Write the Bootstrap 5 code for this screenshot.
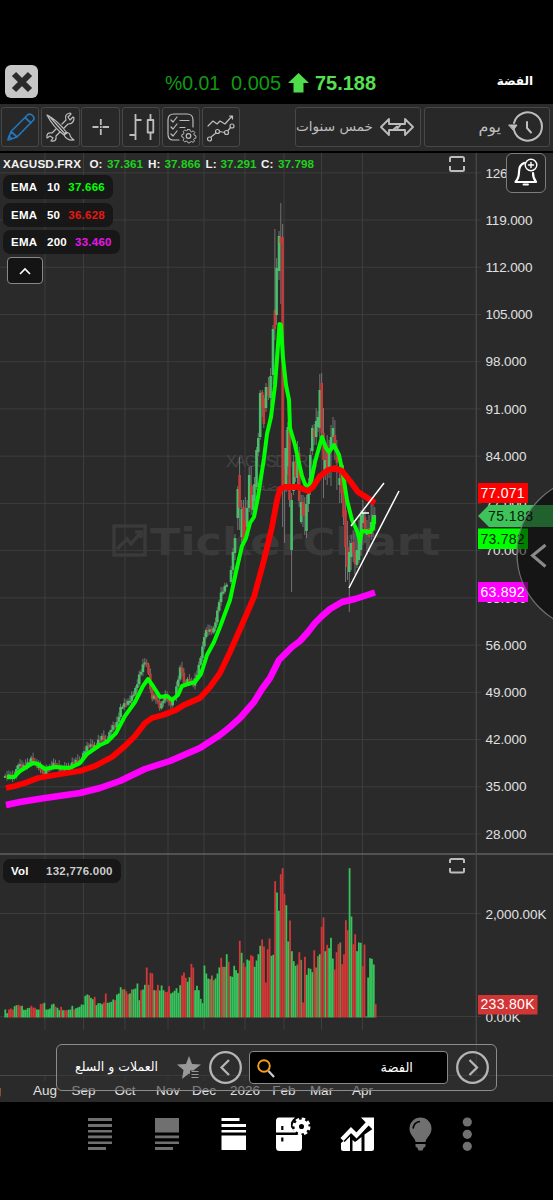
<!DOCTYPE html>
<html lang="ar">
<head>
<meta charset="utf-8">
<meta name="viewport" content="width=device-width, initial-scale=1">
<title>TickerChart</title>
<link href="https://cdn.jsdelivr.net/npm/bootstrap@5.3.0/dist/css/bootstrap.min.css" rel="stylesheet">
<style>
body{background:#000;color:#fff;font-family:"Liberation Sans","DejaVu Sans",sans-serif;width:553px;height:1200px;overflow:hidden}
.ar{font-family:"DejaVu Sans",sans-serif;white-space:nowrap;line-height:1}
.quote-bar{height:104px;padding:60px 20px 0 5px}
.quote-title{font-size:12px;margin-top:15px}
.close-btn{width:33px;height:33px;border-radius:6px;background:#c6c6c6;margin-top:5px}
.quote-values{margin-left:6px}
.tool-bar{height:47px;background:#2b2b2b;padding:3px 3px 4px 1px}
.tool{width:38.4px;height:40px;border:1px solid #484848;border-radius:3px;background:#282828}
.tool-wide{width:126px;color:#bdbdbd;font-size:14px}
.tool svg,.tool-wide svg{fill:none;stroke:#bdbdbd;stroke-width:1.2;stroke-linecap:round;stroke-linejoin:round}
.chart{height:951px;background:#2a2a2a}
.legends{left:3px;top:24px;gap:3.4px}
.pill{height:24.2px;border-radius:7px;background:#161616e8;font-weight:700;font-size:11.5px;letter-spacing:.25px;line-height:24px;padding:0 8px;white-space:nowrap}
.fold{left:7px;top:106px;width:36px;height:27px;border:1px solid #888;border-radius:4px;background:#141414}
.vol{left:3px;top:708px;width:118px}
.bell{left:506px;top:2px;width:40px;height:40px;border:1px solid #7d7d7d;border-radius:6px;background:#242424}
.picker{left:56px;top:893px;width:441px;height:47px;border:1.5px solid #8c8c8c;border-radius:6px;background:rgba(48,48,48,.55);padding:0 6px 0 18px}
.find{width:199px;height:33px;border:1px solid #888;border-radius:4px;background:#000;padding:0 34px 0 5px;font-size:13px}
.foot{height:98px}
</style>
</head>
<body class="d-flex flex-column">
<header class="quote-bar d-flex align-items-start flex-shrink-0">
  <div class="close-btn d-flex align-items-center justify-content-center flex-shrink-0">
    <svg width="22" height="22" viewBox="0 0 22 22"><path d="M3 3L19 19M19 3L3 19" stroke="#2b2b2b" stroke-width="6"/></svg>
  </div>
  <svg width="336" height="40" viewBox="44 60 336 40" class="quote-values flex-shrink-0" font-size="20">
    <g fill="#129b12"><text x="165" y="89.500" textLength="55" lengthAdjust="spacingAndGlyphs">%0.01</text><text x="231" y="89.500" textLength="50" lengthAdjust="spacingAndGlyphs">0.005</text></g>
    <path d="M298.500 73L309 83H303.500V92.500H293.500V83H288Z" fill="#4fdd4b"/>
    <text x="315" y="89.500" fill="#57e052" font-weight="700" textLength="61" lengthAdjust="spacingAndGlyphs">75.188</text>
  </svg>
  <div class="quote-title ar fw-bold ms-auto">الفضة</div>
</header>

<nav class="tool-bar d-flex flex-shrink-0 justify-content-between">
  <div class="d-flex" style="gap:1.8px">
    <div class="tool"><svg width="37" height="38" viewBox="0 0 37 38" style="stroke:#2376b9;stroke-width:1.7"><path d="M6 32L9 23.500 25.500 7Q28 5 30.500 7.500T31.500 12L15 29ZM9 23.500L15 29M23 9.500L29 15M6 32l4-1-3-3z"/></svg></div>
    <div class="tool"><svg width="37" height="38" viewBox="0 0 37 38"><path d="M5 7Q13 11 21 20L25 25 22 27Q11 19 5 7ZM7 8L23 26M22 27Q25 33 32 32Q28 29 28 27T24 24Z"/><path d="M20 16L24 12Q22 6 28 5L29 6 26 9 28 12 31 9 32 10Q32 16 26 16L22 20M14 21L10 25Q4 24 5 30L8 28 11 30 9 33Q15 34 14 28L18 24"/></svg></div>
    <div class="tool"><svg width="37" height="38" viewBox="0 0 37 38" style="stroke-linecap:butt;stroke-width:1.8"><path d="M10.500 19H16.500M20.500 19H27M18.800 11V17M18.800 21V27M18 19h1.600"/></svg></div>
    <div class="tool"><svg width="37" height="38" viewBox="0 0 37 38" style="stroke-width:1.8;stroke-linecap:butt"><path d="M12.500 6V32M12.500 12H18.500M6.500 27H12.500M27.500 6V12M27.500 24.500V32M24.700 12H30.300V24.500H24.700Z"/></svg></div>
    <div class="tool"><svg width="37" height="38" viewBox="0 0 37 38"><path d="M16 32H10Q5 32 5 26V12Q5 6 11 6H24Q30 6 30 12V19M8 12l2 2 4-5M8 19l2 2 4-5M8 26l2 2 4-5M17 12.500H26M17 19.500H22"/><path d="M24 20h3l.5 2.200 1.600.7 2-1.200 2 2-1.200 2 .6 1.500 2 .6v3l-2 .4-.7 1.500 1 1.800-1.900 1.500-2-1-1.500.6-.4 1-2.500 0-.6-1.500-1.500-.7-2 1-2-2 1.200-2-.7-1.500-2-.5v-3l2-.5.7-1.500-1-2 2-1.800 1.900 1 1.500-.7Z" transform="translate(5.300 5.500) scale(.8)"/><circle cx="25.500" cy="28" r="2.300"/></svg></div>
    <div class="tool"><svg width="37" height="38" viewBox="0 0 37 38"><path d="M5 18L10 13 14 16 17 13 22 16 29 8M26.500 8H29.500V11"/><path d="M8 29L13 25M16.500 23.500L21.500 24.500M25 22.500L27.500 19.500"/><circle cx="6.500" cy="31" r="2"/><circle cx="14.500" cy="23.500" r="2"/><circle cx="23.500" cy="24.500" r="2"/><circle cx="29" cy="18" r="2"/></svg></div>
  </div>
  <div class="d-flex" style="gap:3px">
    <div class="tool tool-wide d-flex align-items-center justify-content-end"><span class="ar" style="font-size:13.600px">خمس سنوات</span>
      <svg width="47" height="38" viewBox="0 0 47 38" class="flex-shrink-0" style="stroke-width:1.8"><path d="M8 19L16 11V16H32V11L40 19 32 27V22H16V27ZM20 22L24 18.500 24.500 20.500 28 16"/></svg></div>
    <div class="tool tool-wide d-flex align-items-center justify-content-end"><span class="ar" style="font-size:16px">يوم</span>
      <svg width="48" height="38" viewBox="0 0 48 38" class="flex-shrink-0" style="stroke-width:2"><path d="M13 22A14.200 14.200 0 1 0 13 15M26 14V20L30 24.500"/><path d="M8 17H16L12.500 22Z" fill="#bdbdbd" stroke-width="1"/></svg></div>
  </div>
</nav>

<main class="chart position-relative flex-shrink-0">
  <svg id="plot" class="d-block" width="553" height="951" viewBox="0 151 553 951" font-size="13.500">
    <rect x="0" y="151" width="553" height="2" fill="#000"/>
    <g id="grid" stroke="#3d3d3d" stroke-width="1"></g>
    <path d="M0 854H553" stroke="#606060" stroke-width="1.500"/>
    <path d="M476.300 153V1075" stroke="#484848" stroke-width="1.300"/><path d="M0 1075.500H553" stroke="#484848"/>
    <g fill="#3a3a3a" stroke="none">
      <text x="226" y="467" font-size="16" fill="#444" textLength="92">XAGUSD.FRX</text>
      <text x="277" y="491" font-size="15" fill="#444" font-family="DejaVu Sans" text-anchor="middle">الفضة</text>
      <text x="150" y="555" font-size="37" font-family="DejaVu Sans" font-weight="700" textLength="290" lengthAdjust="spacingAndGlyphs">TickerChart</text>
    </g>
    <path d="M114 526H145V555H114ZM117 549L127 539 131 544 141 532M135 532H141V538" fill="none" stroke="#3a3a3a" stroke-width="3.500"/>
    <g id="bars"></g>
    <g id="candles"></g>
    <g fill="none" stroke-linejoin="round">
      <path stroke="#0f0" stroke-width="4" d="M7 777L14 777 20 771 25 768 33 763 38 764 45 769 55 767 70 768 80 763 87 754 100 745 107 742 116 733 125 716 135 702 143 686 148 679 153 686 160 697 167 696 172 700 178 695 182 686 188 684 195 682 201 674 207 655 214 642 220 627 230 600 236 572 242 546 246 538 250 523 254 517 258 497 264 458 267 434 271 417 275 385 278 345 279.500 324 281 325 283 358 286 385 289 400 290 428 295 445 299 463 302 476 305 484 308 488 311 482 315 462 322 437 326 448 329 452 334 445 339 455 343 474 347 500 352 520 357 531 360 541 362 531 370 532 373 528 374 517"/>
      <path stroke="#f00" stroke-width="5.800" d="M6 788L15 786 25 783 38 778 55 775 80 771 95 766 112 757 125 746 135 736 145 723 152 718 163 715 176 710 184 705 200 698 210 687 220 673 230 652 241 627 254 597 264 560 272 527 277 500 280 489 285 487 298 487 308 491 313 487 320 476 328 470 335 468 342 471 350 481 358 492 366 497 375 503"/>
      <path stroke="#f0f" stroke-width="6.500" d="M6 805L20 802 45 798 80 793 100 788 120 781 145 769 170 761 200 748 220 735 230 727 240 718 254 702 262 689 270 678 279 660 284 655 292 647 300 641 308 632 315 623 322 616 330 609 342 602 355 599 375 592.500"/>
      <path stroke="#fff" stroke-width="1.500" d="M351 526L384 483M349 588L399 491M361 513H369"/>
      <path stroke="#bcbcbc" stroke-width="2" d="M450 162V158.500Q450 157 451.500 157H462.500Q464 157 464 158.500V162M450 166V169.500Q450 171 451.500 171H462.500Q464 171 464 169.500V166M450 863V860.500Q450 859 451.500 859H462.500Q464 859 464 860.500V863M450 868V871Q450 872.500 451.500 872.500H462.500Q464 872.500 464 871V868"/>
    </g>
    <g id="scale" fill="#e0e0e0"></g>
    <g font-size="11.700" font-weight="700" fill="#f2f2f2">
      <text x="3" y="167.500" textLength="78">XAGUSD.FRX</text>
      <text x="89.500" y="167.500">O:</text><text x="148" y="167.500">H:</text><text x="205.500" y="167.500">L:</text><text x="261" y="167.500">C:</text>
      <g fill="#1fd01f"><text x="107" y="167.500" textLength="36">37.361</text><text x="164.500" y="167.500" textLength="36">37.866</text><text x="220.500" y="167.500" textLength="36">37.291</text><text x="278" y="167.500" textLength="36">37.798</text></g>
    </g>
    <g font-size="14">
      <path d="M478 483H528V503H478Z" fill="#f00"/><text x="480.500" y="497.500" fill="#fff" textLength="44">77.071</text>
      <path d="M478 528.500H528V549H478Z" fill="#0f0"/><text x="480.500" y="543.500" fill="#052305" textLength="44">73.782</text>
      <path d="M478 516L489 505H553V527H489Z" fill="#40c25b"/><text x="488" y="521" fill="#061a08" textLength="45">75.188</text>
      <path d="M478 582H528V602H478Z" fill="#f0f"/><text x="480.500" y="596.500" fill="#fff" textLength="44">63.892</text>
      <path d="M478 995H537.500V1014.500H478Z" fill="#d23535"/><text x="480.500" y="1009" fill="#fff" textLength="54">233.80K</text>
    </g>
    <circle cx="593.700" cy="553.500" r="76.700" fill="#000" fill-opacity=".5" stroke="#707070" stroke-width="1.300"/>
    <path d="M545.500 545L532.500 555.500 545.500 566.500" fill="none" stroke="#8a8a8a" stroke-width="3"/>
  </svg>

  <div class="legends position-absolute d-flex flex-column align-items-start">
    <div class="pill d-flex" style="width:110px"><span style="width:36px">EMA</span><span style="width:21.500px">10</span><span style="color:#0f0">37.666</span></div>
    <div class="pill d-flex" style="width:110px"><span style="width:36px">EMA</span><span style="width:21.500px">50</span><span style="color:#e8170f">36.628</span></div>
    <div class="pill d-flex" style="width:117px"><span style="width:36px">EMA</span><span style="width:28px">200</span><span style="color:#e815e8">33.460</span></div>
  </div>
  <div class="fold position-absolute d-flex align-items-center justify-content-center"><svg width="14" height="8" viewBox="0 0 14 8"><path d="M2 7L7 2 12 7" fill="none" stroke="#fff" stroke-width="1.600"/></svg></div>
  <div class="pill vol position-absolute d-flex"><span style="width:35px">Vol</span><span style="color:#ccc">132,776.000</span></div>
  <div class="bell position-absolute">
    <svg width="38" height="38" viewBox="0 0 38 38" fill="none" stroke="#fff" stroke-width="1.800" stroke-linecap="round" stroke-linejoin="round"><path d="M17 9Q12 11 12 18 12 24 8.500 28H29Q26 24 26 19" stroke-width="2.200"/><path d="M16.500 30.500H21"/><circle cx="24" cy="11" r="5.800" stroke-width="1.400"/><path d="M21.500 11H26.500M24 8.500V13.500" stroke-width="1.400"/></svg>
  </div>

  <div class="picker position-absolute d-flex align-items-center">
    <span class="ar" style="font-size:12.500px;width:99px">العملات و السلع</span>
    <svg width="34" height="28" viewBox="0 0 34 28"><path d="M15 2L18 10 27 10.500 20 16 22 24 15 19.500 8 25 9.500 16 3 10.500 12 10Z" fill="#999"/><path d="M16 16.500H25V26H16Z" fill="#2c2c2c"/><path d="M17.500 17.500H24.500M17.500 20.500H24.500M17.500 23.500H24.500" stroke="#999" stroke-width="1.200"/></svg>
    <svg class="flex-shrink-0" width="35" height="35" viewBox="0 0 35 35" fill="none" stroke="#b5b5b5" stroke-width="2.300"><circle cx="17.500" cy="17.500" r="15.300"/><path d="M21 10L13.500 17.500 21 25"/></svg>
    <div class="find flex-shrink-0 d-flex align-items-center justify-content-between" style="margin:0 7px 0 6px">
      <svg width="22" height="22" viewBox="0 0 22 22" fill="none"><circle cx="9" cy="9" r="5.800" stroke="#f5a01c" stroke-width="1.900"/><path d="M13.500 14L19 20" stroke="#ccc" stroke-width="2.200"/></svg>
      <span class="ar">الفضة</span>
    </div>
    <svg class="flex-shrink-0" width="35" height="35" viewBox="0 0 35 35" fill="none" stroke="#b5b5b5" stroke-width="2.300"><circle cx="17.500" cy="17.500" r="15.300"/><path d="M14.500 10L22 17.500 14.500 25"/></svg>
  </div>
</main>

<footer class="foot flex-shrink-0">
  <svg width="553" height="98" viewBox="0 1102 553 98" class="d-block">
    <path fill="#707070" d="M88 1118h24v3h-24zM88 1124h24v3h-24zM88 1130h24v2.600h-24zM88 1135.500h24v2.700h-24zM88 1141.500h24v2.500h-24zM88 1147h18v3h-18zM155 1118h24v14.500h-24zM155 1135.500h24v2.700h-24zM155 1141.500h24v2.500h-24zM155 1147h18v3h-18z"/>
    <path fill="#fff" d="M221.500 1118h18v3h-18zM221.500 1124h24.500v3h-24.500zM221.500 1130h24.500v2.600h-24.500zM221.500 1135.500h24.500v14.500h-24.500z"/>
    <path fill="#fff" d="M279 1117.500H295Q290 1121 291 1127L295 1132.500H276V1121Q276 1117.500 279 1117.500ZM276 1135H302V1147.500Q302 1151 298.500 1151H279.500Q276 1151 276 1147.500Z"/>
    <path d="M282.300 1126v4M282.300 1137.500v4" stroke="#000" stroke-width="2.200"/>
    <circle cx="301.500" cy="1126.500" r="4.800" fill="none" stroke="#fff" stroke-width="4.500"/>
    <circle cx="301.500" cy="1126.500" r="7.500" fill="none" stroke="#fff" stroke-width="3" stroke-dasharray="3.400 2.490"/>
    <path fill="#fff" d="M341 1143L350 1136V1151H343.500Q341 1151 341 1148.500ZM352.500 1140L355 1142 361.500 1137V1151H352.500ZM364.500 1134.500L374 1128V1148.500Q374 1151 371.500 1151H364.500Z"/>
    <path d="M342 1139.500L351 1130 356.500 1135.500 368 1123" stroke="#000" stroke-width="7.500" fill="none"/>
    <path d="M342 1139.500L351 1130 356.500 1135.500 369 1122" stroke="#fff" stroke-width="4.300" fill="none"/>
    <path d="M361 1117.500H374V1131Z" fill="#fff"/>
    <path fill="#707070" d="M420.500 1117.500a11 11 0 0 1 11 11Q431.500 1133 428 1137 425.500 1140 425.500 1142H415.500Q415.500 1140 413 1137 409.500 1133 409.500 1128.500a11 11 0 0 1 11-11ZM415.500 1144H425.500V1146.500L423.500 1148 422.500 1150.500H418.500L417.500 1148 415.500 1146.500Z"/>
    <path d="M413 1128.500Q414 1122 420 1121.500" fill="none" stroke="#000" stroke-width="1.700"/>
    <g fill="#707070"><circle cx="467.300" cy="1122" r="4.600"/><circle cx="467.300" cy="1134.300" r="4.600"/><circle cx="467.300" cy="1146.300" r="4.600"/></g>
  </svg>
</footer>

<script src="https://cdn.jsdelivr.net/npm/bootstrap@5.3.0/dist/js/bootstrap.bundle.min.js"></script>
<script>
const put=(id,s)=>document.getElementById(id).innerHTML=s;
const GREEN='#38c45c',RED='#d23838';
// grid and scales
const months=[['Aug',45],['Sep',83.5],['Oct',125],['Nov',168],['Dec',204],['2026',245],['Feb',284],['Mar',321.5],['Apr',362.5]];
let g='',s='<text x="-6.500" y="1095">g</text>';
months.forEach(m=>{g+=`<path d="M${m[1]} 153V1030M${m[1]} 1075V1081"/>`;s+=`<text x="${m[1]}" y="1095" text-anchor="middle">${m[0]}</text>`});
for(let i=0;i<15;i++){const y=172.8+47.23*i;g+=`<path d="M0 ${y}H481"/>`;s+=`<text x="485.500" y="${y+4.7}" textLength="${i<4?47:41}">${126-7*i}.000</text>`}
[[913.5,'2,000.00K',61],[1016.5,'0.00K',35]].forEach(v=>{g+=`<path d="M0 ${v[0]}H481"/>`;s+=`<text x="485.500" y="${v[0]+5}" textLength="${v[2]}">${v[1]}</text>`});
put('grid',g);put('scale',s);
// volume: bar heights in thirds of a pixel, r marks a falling session, m a mixed one
const vol='24 13 24r 27r 24r 34 37 38r 35r 35 23 23 28 29 35r 30r 29r 24 24 41r 41r 44 24 24 27 39 41 33r 29 22 32r 22 22r 22r 23 24 35 24r 28 30 32 39 38 65 69 67m 59 55 62r 37 43 43 40 45r 72r 44 45 47 54 52r 69 72 91 84m 85m 79r 70r 72 84m 85 87 102 52 82r 84 98 150r 98m 134r 132r 82 82r 98r 81 96 82 77r 77r 94r 72 75 80 88 74 97 126r 135r 119r 107 121 161r 150r 82 95 82 56 43 156 132 117 115m 126m 112m 117 132 150 179r 152m 152m 190 167r 124 122 155 142 133 230r 194 164r 152r 174 171 187r 184r 152 171 190 215 234r 213r 105r 205r 237r 185 188 409r 375 320 430r 448r 371r 337 228 291r 199 169 155 159m 196r 173m 45r 182r 128 148 146 136 202r 150m 184m 190 272r 300r 199 218r 208 239 177 144r 196r 220r 225m 160r 190r 292r 262r 448 303 220r 250r 199 225 224 154r 219r 3 120 178 176 159 40r'.split(' ');
put('bars',vol.map((v,i)=>{const h=parseInt(v)/3,c=v.endsWith('r')?RED:v.endsWith('m')?'#91754a':GREEN;return `<rect x="${(4.4+i*1.861).toFixed(2)}" y="${(1017.5-h).toFixed(1)}" width="1.8" height="${h.toFixed(1)}" fill="${c}"/>`}).join(''));
// early sessions follow the closing path
const path=[[5,776],[8,775],[12,778],[15,774],[18,763],[22,768],[26,764],[31,759],[35,763],[40,767],[43,775],[48,768],[53,764],[60,768],[65,769],[70,766],[73,761],[80,762],[84,751],[88,746],[95,745],[102,737],[107,740],[112,727],[116,725],[121,707],[126,703],[132,697],[136,688],[139,675],[145,661],[149,673],[151,697],[155,697],[160,707],[165,695],[170,705],[175,695],[178,680],[181,664],[184,684],[188,680],[193,684],[198,670],[203,645],[205,630],[208,630],[213,632],[216,618],[220,596],[226,585],[228,578]];
const at=x=>{for(let i=1;i<path.length;i++)if(x<=path[i][0]){const a=path[i-1],b=path[i];return a[1]+(b[1]-a[1])*(x-a[0])/(b[0]-a[0])}return 578};
let c='',prev=776;
const candle=(x,o,cl,hi,lo,col)=>{const t=Math.min(o,cl),h=Math.max(2,Math.abs(o-cl));c+=`<path d="M${x} ${hi}V${lo}" stroke="#858585" stroke-width=".8"/><rect x="${x-1.3}" y="${t}" width="2.600" height="${h}" fill="${col}"/>`};
for(let i=0;i<120;i++){const x=5.2+i*1.861,y=at(x)+[0,1.8,-1.5,1,-1.2,2][i*7%6];const w=2+(i*5%7)*.6;candle(x,prev,y,Math.min(prev,y)-w,Math.max(prev,y)+w*.7,y<=prev?'#4abf6b':'#c43c3a');prev=y}
// x, body top, body bottom, wick top, wick bottom, direction
[[231,570,582,566,584,1],[233,552,570,548,574,1],[235,538,553,534,560,1],[237.8,489,518,486,530,1],[239.6,475,508,457,530,0],[241.7,509,537,500,543,1],[243.5,507,540,500,545,0],[245.4,520,537,497,540,0],[247.2,508,527,500,532,1],[249.2,475,508,467,512,1],[251.200,485,509,466,515,0],[253,495,510,486,515,1],[254.5,484,501,477,505,1],[256.5,450,487,447,490,1],[258.3,438,452,433,456,1],[260.2,393,437,390,440,1],[262.3,392,407,390,417,0],[263.8,398,424,395,428,0],[266,387,408,383,412,1],[268.4,387,396,377,400,0],[270.6,376,398,368,406,1],[273,329,375,325,385,1],[274.9,310,329,229,340,0],[276.6,268,315,258,325,1],[279,236,271,231,280,1],[280.800,237,243,203,304,0],[282.6,237,490,224,527,0],[284.6,470,487,448,543,0],[286.2,448,484,430,492,1],[287.8,427,466,422,475,1],[289.5,427,500,420,507,0],[291.6,500,550,493,592,1],[293.6,462,491,455,495,1],[295.5,462,477,440,482,0],[297.5,453,478,441,490,1],[299.2,453,501,447,507,0],[301.2,502,522,495,524,1],[303,502,516,495,527,0],[304.800,506,516,497,535,0],[306.5,504,531,495,538,1],[308.5,485,504,478,512,1],[310.3,455,484,448,495,1],[312.3,428,451,425,455,1],[314.2,430,437,424,445,0],[316.2,421,437,408,445,1],[318,417,427,411,432,1],[319.8,390,428,374,438,1],[321.7,383,433,373,445,0],[323.5,433,460,408,498,0],[325.3,460,470,450,480,1],[327.2,445,470,435,485,0],[329.1,450,468,440,478,1],[331,437,447,425,486,1],[333,428,437,417,445,1],[334.9,435,450,420,460,0],[336.9,450,463,440,490,0],[339.7,478,485,461,503,1],[341.500,466,493,460,503,0],[343.5,477,517,465,525,0],[345.5,510,547,497,582,0],[347.5,547,567,521,580,0],[349.3,552,572,540,612,1],[351.2,543,557,535,570,1],[353.2,542,553,530,562,0],[355,552,564,530,575,0],[357,550,565,535,568,1],[359,533,560,520,563,1],[361,515,550,510,556,1],[362.9,513,523,500,545,1],[365,517,532,510,543,0],[367,529,535,520,555,1],[369,528,537,515,552,0],[371.200,522,534,504,540,1],[373,515,530,502,537,1],[374.8,515,524,507,531,1]].forEach(k=>candle(k[0],k[1],k[2],k[3],k[4],k[5]?'#4abf6b':'#c43c3a'));
put('candles',c);
</script>
</body>
</html>
